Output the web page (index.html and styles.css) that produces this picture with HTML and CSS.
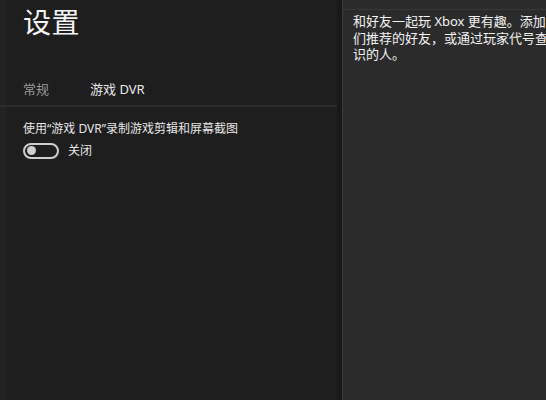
FILE: index.html
```html
<!DOCTYPE html>
<html lang="zh-CN">
<head>
<meta charset="utf-8">
<link rel="stylesheet" href="styles.css">
</head>
<body>
<div class="app">
  <div class="left">
    <div class="edge"></div>
    <div class="main">
      <div class="content">
        <h1 class="title">设置</h1>
        <div class="tabs">
          <span class="tab">常规</span>
          <span class="tab active">游戏 DVR</span>
        </div>
      </div>
      <div class="divider"></div>
      <div class="content">
        <div class="label">使用“游戏 DVR”录制游戏剪辑和屏幕截图</div>
        <div class="toggle-row">
          <span class="toggle"><span class="knob"></span></span>
          <span class="toggle-text">关闭</span>
        </div>
      </div>
    </div>
  </div>
  <div class="sep"></div>
  <div class="right">
    <div class="topline"></div>
    <div class="desc">
      <div class="line">和好友一起玩 Xbox 更有趣。添加我</div>
      <div class="line">们推荐的好友，或通过玩家代号查找你认</div>
      <div class="line">识的人。</div>
    </div>
  </div>
</div>
</body>
</html>
```

FILE: styles.css
```css
html, body {
  margin: 0;
  padding: 0;
  background: #1f1f1f;
  overflow: hidden;
}
body {
  width: 546px;
  height: 400px;
  font-family: "Noto Sans", "Noto Sans CJK SC", sans-serif;
  color: #ffffff;
}
.app {
  display: flex;
  width: 546px;
  height: 400px;
}
.left {
  display: flex;
  width: 337px;
  flex: none;
  background: #1e1e1e;
}
.edge {
  width: 6px;
  background: #232323;
  border-right: 1px solid #202020;
  flex: none;
}
.main {
  flex: 1;
  display: flex;
  flex-direction: column;
}
.content {
  padding-left: 16px;
}
.title {
  margin: 0;
  padding-top: 2px;
  font-size: 28px;
  font-weight: 400;
  line-height: 40px;
  color: #f4f4f4;
  letter-spacing: 0.5px;
}
.tabs {
  display: flex;
  gap: 41px;
  margin-top: 38px;
  height: 25px;
  font-size: 13px;
  line-height: 18px;
}
.tab {
  color: #9a9a9a;
}
.tab.active {
  color: #e8e8e8;
}
.divider {
  height: 2px;
  background: #2c2c2c;
  margin-left: -7px;
}
.label {
  margin-top: 13px;
  font-size: 12px;
  line-height: 17px;
  color: #e6e6e6;
}
.toggle-row {
  display: flex;
  align-items: center;
  gap: 9px;
  margin-top: 5px;
}
.toggle {
  box-sizing: border-box;
  width: 36px;
  height: 16px;
  border: 2px solid #cfcfcf;
  border-radius: 8px;
  display: flex;
  align-items: center;
  padding-left: 2px;
}
.knob {
  width: 9px;
  height: 9px;
  border-radius: 50%;
  background: #cfcfcf;
}
.toggle-text {
  font-size: 12px;
  line-height: 17px;
  color: #e6e6e6;
}
.sep {
  width: 5px;
  flex: none;
  background: #181818;
  border-right: 1px solid #3a3a3a;
}
.right {
  flex: 1;
  background: #2b2b2b;
  overflow: hidden;
}
.topline {
  height: 9px;
  border-bottom: 1px solid #383838;
}
.desc {
  padding-left: 10px;
  padding-top: 3px;
  font-size: 13px;
  line-height: 16.5px;
  color: #f2f2f2;
}
.line {
  white-space: nowrap;
}
```
